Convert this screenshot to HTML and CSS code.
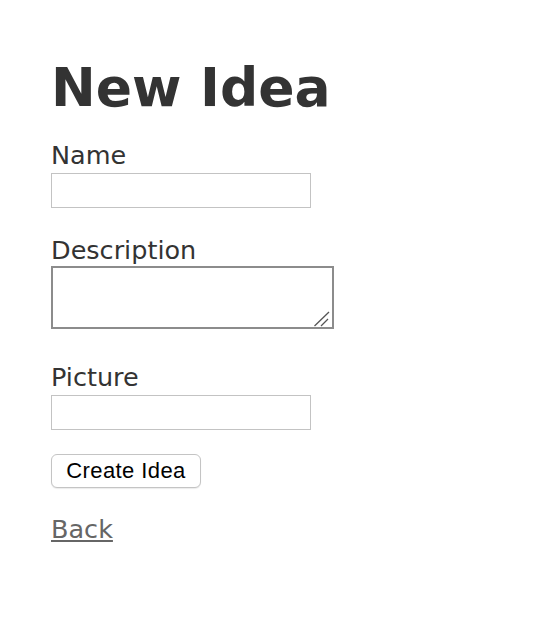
FILE: index.html
```html
<!DOCTYPE html>
<html>
<head>
<meta charset="utf-8">
<title>New Idea</title>
<link rel="stylesheet" href="styles.css">
</head>
<body>
<main class="page">
  <h1 class="title">New Idea</h1>
  <form class="form">
    <div class="field field-name">
      <label class="label" for="name">Name</label>
      <input class="input" id="name" type="text">
    </div>
    <div class="field">
      <label class="label" for="desc">Description</label>
      <div class="textarea-wrap">
        <textarea class="textarea" id="desc"></textarea>
        <svg class="grip" width="18" height="16" viewBox="0 0 18 16">
          <line x1="1.5" y1="15" x2="16" y2="1" stroke="#555" stroke-width="1.3"/>
          <line x1="8" y1="15" x2="15" y2="8" stroke="#555" stroke-width="1.3"/>
        </svg>
      </div>
    </div>
    <div class="field field-picture">
      <label class="label" for="pic">Picture</label>
      <input class="input" id="pic" type="text">
    </div>
    <div class="actions">
      <button class="button" type="button">Create Idea</button>
    </div>
  </form>
  <a class="back" href="#">Back</a>
</main>
</body>
</html>
```
FILE: styles.css
```css
html, body {
  margin: 0;
  padding: 0;
  background: #fff;
}
body {
  font-family: "DejaVu Sans", Verdana, sans-serif;
  color: #333;
}
.page {
  display: flex;
  flex-direction: column;
  align-items: flex-start;
  padding: 61px 0 0 51px;
}
.title {
  margin: 0;
  font-size: 53.5px;
  line-height: 53px;
  font-weight: bold;
  color: #333;
}
.form {
  display: flex;
  flex-direction: column;
  align-items: flex-start;
  margin-top: 26px;
}
.field {
  display: flex;
  flex-direction: column;
  align-items: flex-start;
  margin-bottom: 26px;
}
.field-name {
  margin-bottom: 27px;
}
.field-picture {
  margin-top: 7px;
  margin-bottom: 24px;
}
.label {
  font-size: 25.5px;
  line-height: 30px;
  color: #333;
}
.input {
  margin: 3px 0 0 0;
  box-sizing: border-box;
  width: 260px;
  height: 35px;
  border: 1px solid #c3c3c3;
  padding: 2px 4px;
  background: #fff;
  outline: none;
}
.textarea-wrap {
  position: relative;
  margin-top: 1px;
  display: flex;
}
.textarea {
  margin: 0;
  box-sizing: border-box;
  width: 283px;
  height: 63px;
  border: 2px solid #8c8c8c;
  padding: 2px;
  background: #fff;
  resize: none;
  outline: none;
}
.grip {
  position: absolute;
  right: 3px;
  bottom: 2px;
}
.actions {
  display: flex;
}
.button {
  box-sizing: border-box;
  width: 150px;
  height: 34px;
  margin: 0;
  padding: 0;
  font-family: "Liberation Sans", Arial, sans-serif;
  font-size: 22px;
  letter-spacing: 0.4px;
  color: #000;
  background: #fff;
  border: 1px solid #c4c4c4;
  border-radius: 6px;
  box-shadow: 0 1px 1px rgba(0,0,0,0.08);
}
.back {
  margin-top: 26px;
  font-size: 25.5px;
  line-height: 30px;
  color: #666;
  text-decoration: underline;
}
```
